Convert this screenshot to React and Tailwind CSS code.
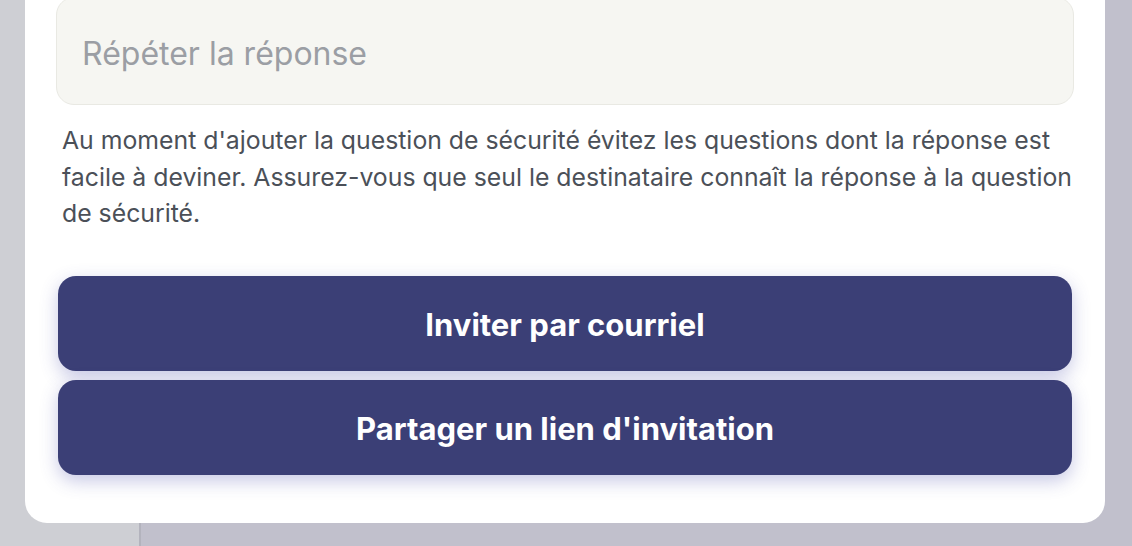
import React from "react";

const App = () => {
  const buttons = ["Inviter par courriel", "Partager un lien d'invitation"];

  return (
    <div className="relative w-full h-[546px] overflow-hidden bg-[#c1c0cc] font-['Inter',sans-serif]">
      {/* Page behind the modal */}
      <div className="absolute inset-y-0 left-0 w-[141px] bg-[#cecfd4] border-r-2 border-[#b3b3bd]" />

      {/* Modal card */}
      <div className="relative mx-[25px] w-[1080px] h-[523px] bg-white rounded-b-[22px] px-[31px] pb-[48px] flex flex-col">
        <div className="-mt-[3px] h-[108px] rounded-[18px] bg-[#f6f6f2] border border-[#e9e9e3] flex items-center pl-[25px] pt-[6px]">
          <span className="text-[32px] text-[#9b9ea4]">Répéter la réponse</span>
        </div>

        <p className="mt-[17px] pl-[6px] -mr-[10px] text-[24.8px] leading-[36.5px] text-[#4b5058]">
          Au moment d'ajouter la question de sécurité évitez les questions dont
          la réponse est facile à deviner. Assurez-vous que seul le
          destinataire connaît la réponse à la question de sécurité.
        </p>

        <div className="mt-auto mx-[2px] flex flex-col gap-[9px]">
          {buttons.map((label) => (
            <button
              key={label}
              className="h-[95px] pt-[3px] rounded-[18px] bg-[#3b3f76] text-white text-[31px] font-bold shadow-[0_6px_18px_rgba(70,74,170,0.3)]"
            >
              {label}
            </button>
          ))}
        </div>
      </div>
    </div>
  );
};

export default App;
